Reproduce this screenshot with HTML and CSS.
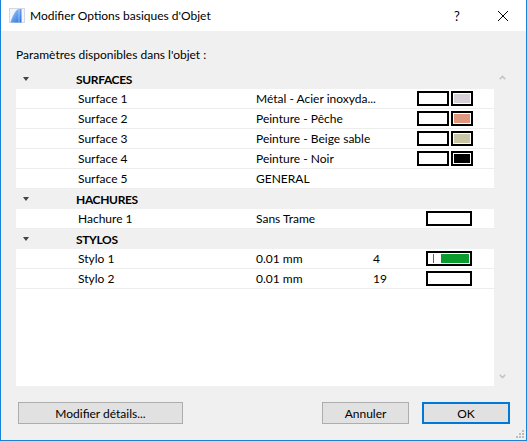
FILE: index.html
```html
<!DOCTYPE html>
<html lang="fr">
<head>
<meta charset="utf-8">
<title>Modifier Options basiques d'Objet</title>
<link rel="stylesheet" href="styles.css">
</head>
<body>
<div class="window">
  <div class="titlebar">
    <svg class="app-icon" viewBox="0 0 16 16" aria-hidden="true">
      <defs>
        <linearGradient id="ag" x1="0" y1="0" x2="1" y2="1">
          <stop offset="0" stop-color="#a9d8fb"/>
          <stop offset="1" stop-color="#2467e0"/>
        </linearGradient>
      </defs>
      <rect x="0.5" y="0.5" width="15" height="14" fill="#f2f5fa" stroke="#d3d9e2"/>
      <path d="M1.5 14.5 C3.5 8 6 2.5 9.5 1 L12.5 1 L12.5 14.5 Z" fill="url(#ag)"/>
      <path d="M9.5 1 L10.5 1 L10.5 14.5 L9.5 14.5 Z" fill="#d8ecfc" opacity="0.6"/>
    </svg>
    <span class="title">Modifier Options basiques d'Objet</span>
    <span class="tb-btn help">?</span>
    <span class="tb-btn close">
      <svg viewBox="0 0 10 10" width="10" height="10" aria-hidden="true"><path d="M0 0 L10 10 M10 0 L0 10" stroke="#000" stroke-width="1" fill="none"/></svg>
    </span>
  </div>

  <div class="content">
    <div class="label">Paramètres disponibles dans l'objet :</div>

    <div class="list">
      <div class="rows">
        <div class="group"><span class="tri"></span><span class="gname">SURFACES</span></div>
        <div class="row"><span></span><span>Surface 1</span><span>Métal - Acier inoxyda...</span><span></span>
          <span class="sw"><i class="box"></i><i class="box fill c-steel"></i></span></div>
        <div class="row"><span></span><span>Surface 2</span><span>Peinture - Pêche</span><span></span>
          <span class="sw"><i class="box"></i><i class="box fill c-peach"></i></span></div>
        <div class="row"><span></span><span>Surface 3</span><span>Peinture - Beige sable</span><span></span>
          <span class="sw"><i class="box"></i><i class="box fill c-beige"></i></span></div>
        <div class="row"><span></span><span>Surface 4</span><span>Peinture - Noir</span><span></span>
          <span class="sw"><i class="box"></i><i class="box fill c-black"></i></span></div>
        <div class="row"><span></span><span>Surface 5</span><span>GENERAL</span><span></span><span></span></div>

        <div class="group"><span class="tri"></span><span class="gname">HACHURES</span></div>
        <div class="row"><span></span><span>Hachure 1</span><span>Sans Trame</span><span></span>
          <span class="sw"><i class="wide"></i></span></div>

        <div class="group"><span class="tri"></span><span class="gname">STYLOS</span></div>
        <div class="row"><span></span><span>Stylo 1</span><span>0.01 mm</span><span>4</span>
          <span class="sw"><i class="wide pen"><b class="pen-line"></b><b class="pen-bar"></b></i></span></div>
        <div class="row"><span></span><span>Stylo 2</span><span>0.01 mm</span><span>19</span>
          <span class="sw"><i class="wide"></i></span></div>
      </div>
      <div class="scrollbar">
        <svg viewBox="0 0 7 5" width="7" height="5" aria-hidden="true"><path d="M0.7 4.3 L3.5 1.4 L6.3 4.3" stroke="#c4c4c4" stroke-width="1.6" fill="none"/></svg>
        <svg viewBox="0 0 7 5" width="7" height="5" aria-hidden="true"><path d="M0.7 0.7 L3.5 3.6 L6.3 0.7" stroke="#c4c4c4" stroke-width="1.6" fill="none"/></svg>
      </div>
    </div>

    <div class="buttons">
      <button class="btn btn-details">Modifier détails...</button>
      <button class="btn btn-cancel">Annuler</button>
      <button class="btn btn-ok">OK</button>
    </div>
  </div>

  <svg class="grip" viewBox="0 0 9 9" width="9" height="9" aria-hidden="true">
    <rect x="7" y="1" width="2" height="2" fill="#bdbdbd"/>
    <rect x="4" y="4" width="2" height="2" fill="#bdbdbd"/>
    <rect x="7" y="4" width="2" height="2" fill="#bdbdbd"/>
    <rect x="1" y="7" width="2" height="2" fill="#bdbdbd"/>
    <rect x="4" y="7" width="2" height="2" fill="#bdbdbd"/>
    <rect x="7" y="7" width="2" height="2" fill="#bdbdbd"/>
  </svg>
</div>
</body>
</html>
```

FILE: styles.css
```css
html, body {
  margin: 0;
  padding: 0;
}
body {
  width: 527px;
  height: 441px;
  overflow: hidden;
  font-family: Lato, "Liberation Sans", sans-serif;
  font-size: 12px;
  color: #000;
  background: #f0f0f0;
}
.window {
  position: relative;
  width: 527px;
  height: 441px;
  box-sizing: border-box;
  border: 1px solid #1883d7;
  border-top: 0;
  background: #f0f0f0;
  display: flex;
  flex-direction: column;
}
.titlebar {
  flex: none;
  height: 31px;
  background: #fff;
  display: flex;
  align-items: center;
}
.app-icon {
  flex: none;
  width: 16px;
  height: 16px;
  margin-left: 8px;
}
.title {
  margin-left: 5px;
  font-size: 12px;
  white-space: nowrap;
}
.tb-btn {
  flex: none;
  width: 46px;
  height: 31px;
  display: flex;
  align-items: center;
  justify-content: center;
}
.help {
  margin-left: auto;
  font-size: 13px;
}
.content {
  flex: 1;
  display: flex;
  flex-direction: column;
  padding: 0 16px 0 15px;
}
.label {
  margin-top: 16px;
  height: 16px;
  line-height: 16px;
  white-space: nowrap;
}
.list {
  margin-top: 6px;
  height: 317px;
  display: flex;
  background: #fff;
}
.rows {
  flex: 1;
}
.group {
  height: 20px;
  background: #f0f0f0;
  display: grid;
  grid-template-columns: 60px 1fr;
  align-items: center;
}
.tri {
  width: 0;
  height: 0;
  margin-left: 7px;
  border-left: 3.5px solid transparent;
  border-right: 3.5px solid transparent;
  border-top: 4px solid #454545;
}
.gname {
  font-weight: bold;
  letter-spacing: -0.35px;
}
.row {
  height: 20px;
  box-sizing: border-box;
  border-bottom: 1px solid #ededed;
  display: grid;
  grid-template-columns: 62px 178px 117px 44px 1fr;
  align-items: center;
  white-space: nowrap;
}
.sw {
  display: flex;
  align-items: center;
  gap: 2px;
}
.box, .wide {
  display: block;
  box-sizing: border-box;
  height: 15px;
  border: 2px solid #000;
  background: #fff;
}
.box {
  width: 32px;
}
.box.fill {
  width: 22px;
  padding: 1px;
  background-clip: content-box;
}
.c-steel { background-color: #d6d1d7; }
.c-peach { background-color: #e0967c; }
.c-beige { background-color: #c9c6a6; }
.c-black { background-color: #000; }
.wide {
  width: 46px;
  margin-left: 9px;
}
.pen {
  display: flex;
  align-items: center;
  padding-left: 5px;
}
.pen-line {
  display: block;
  width: 1px;
  height: 9px;
  background: #0a9b2c;
}
.pen-bar {
  display: block;
  width: 28px;
  height: 9px;
  margin-left: 7px;
  background: #0a9b2c;
}
.scrollbar {
  flex: none;
  width: 16px;
  background: #f0f0f0;
  display: flex;
  flex-direction: column;
  justify-content: space-between;
  align-items: center;
  padding: 6px 0 7px;
  box-sizing: border-box;
}
.buttons {
  margin-top: 16px;
  display: flex;
  align-items: center;
}
.btn {
  height: 22px;
  box-sizing: border-box;
  margin: 0;
  padding: 0;
  font-family: inherit;
  font-size: 12px;
  color: #000;
  background: #e1e1e1;
  border: 1px solid #adadad;
  border-radius: 0;
}
.btn-details {
  width: 165px;
  margin-left: 2px;
}
.btn-cancel {
  width: 87px;
  margin-left: auto;
}
.btn-ok {
  width: 88px;
  margin-left: 13px;
  border: 2px solid #0078d7;
}
.grip {
  position: absolute;
  right: 2px;
  bottom: 2px;
}
```
